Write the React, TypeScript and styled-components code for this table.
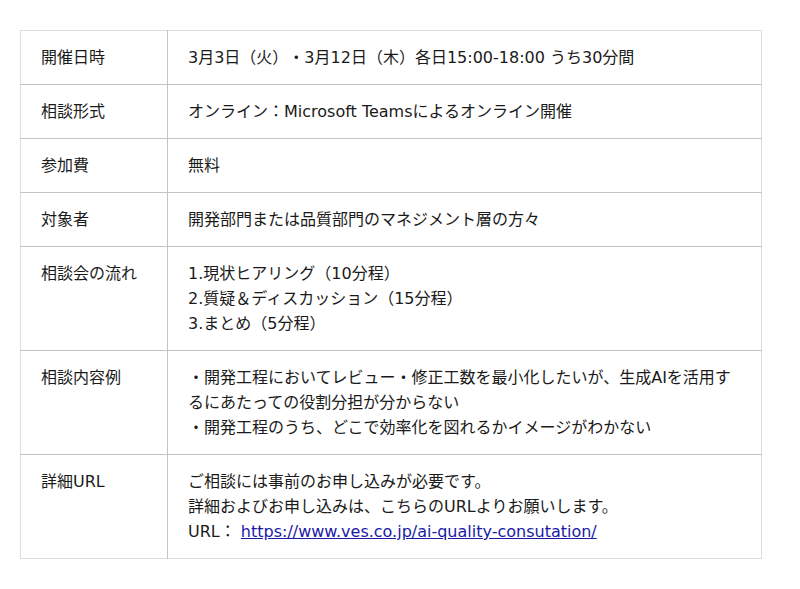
import React from 'react';
import styled, { createGlobalStyle } from 'styled-components';

/**
 * Styles
 */

const GlobalStyle = createGlobalStyle`
  html, body {
    margin: 0;
    padding: 0;
    background: #ffffff;
  }
`;

const Page = styled.div`
  padding: 30px 38px 30px 20px;
  font-family: 'DejaVu Sans', 'Noto Sans CJK JP', sans-serif;
  font-size: 16px;
  color: #1a1a1a;
  text-spacing-trim: space-all;
`;

const InfoTable = styled.table`
  width: 742px;
  border-collapse: collapse;
  border: 1px solid #dddddd;
  table-layout: fixed;
`;

const Row = styled.tr`
  border-top: 1px solid #c4c4c4;

  &:first-child {
    border-top: 1px solid #dddddd;
  }
`;

const LabelCell = styled.th`
  width: 147px;
  box-sizing: border-box;
  padding: 14px 20px;
  border-right: 1px solid #c4c4c4;
  text-align: left;
  vertical-align: top;
  font-weight: 400;
  line-height: 25px;
`;

const ValueCell = styled.td`
  padding: 14px 20px;
  vertical-align: top;
  line-height: 25px;
`;

const Line = styled.div``;

const Link = styled.a`
  color: #1a1aa6;
  text-decoration: underline;
`;

/**
 * Data
 */

const rows: { label: string; lines: React.ReactNode[] }[] = [
  {
    label: '開催日時',
    lines: ['3月3日（火）・3月12日（木）各日15:00-18:00 うち30分間'],
  },
  {
    label: '相談形式',
    lines: ['オンライン：Microsoft Teamsによるオンライン開催'],
  },
  { label: '参加費', lines: ['無料'] },
  { label: '対象者', lines: ['開発部門または品質部門のマネジメント層の方々'] },
  {
    label: '相談会の流れ',
    lines: [
      '1.現状ヒアリング（10分程）',
      '2.質疑＆ディスカッション（15分程）',
      '3.まとめ（5分程）',
    ],
  },
  {
    label: '相談内容例',
    lines: [
      '・開発工程においてレビュー・修正工数を最小化したいが、生成AIを活用するにあたっての役割分担が分からない',
      '・開発工程のうち、どこで効率化を図れるかイメージがわかない',
    ],
  },
  {
    label: '詳細URL',
    lines: [
      'ご相談には事前のお申し込みが必要です。',
      '詳細およびお申し込みは、こちらのURLよりお願いします。',
      <>
        URL：{' '}
        <Link href="#">https://www.ves.co.jp/ai-quality-consutation/</Link>
      </>,
    ],
  },
];

/**
 * Component
 */

export default function App(): JSX.Element {
  return (
    <Page>
      <GlobalStyle />
      <InfoTable>
        <tbody>
          {rows.map((r) => (
            <Row key={r.label}>
              <LabelCell>{r.label}</LabelCell>
              <ValueCell>
                {r.lines.map((l, i) => (
                  <Line key={i}>{l}</Line>
                ))}
              </ValueCell>
            </Row>
          ))}
        </tbody>
      </InfoTable>
    </Page>
  );
}
